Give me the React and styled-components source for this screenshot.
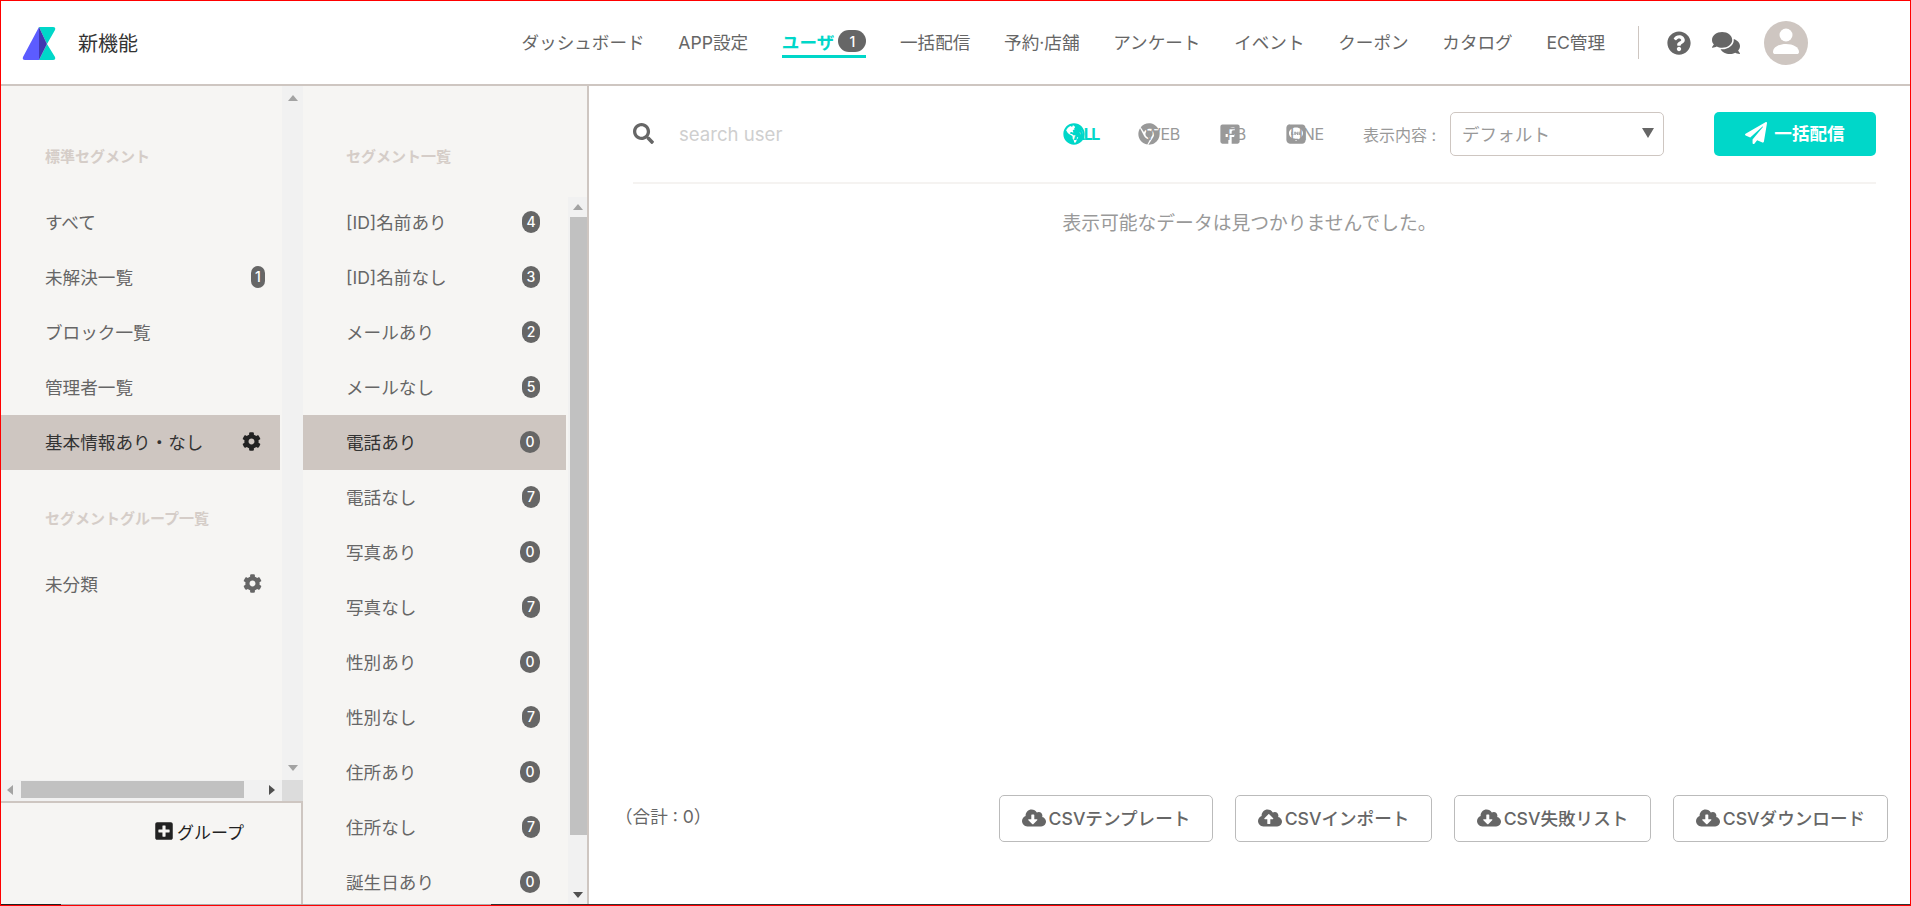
import React from "react";
import styled, { createGlobalStyle } from "styled-components";
import {
  FaChrome,
  FaCloudDownloadAlt,
  FaCloudUploadAlt,
  FaCog,
  FaComments,
  FaFacebookSquare,
  FaGlobeAmericas,
  FaLine,
  FaPaperPlane,
  FaPlusSquare,
  FaQuestionCircle,
  FaSearch,
} from "react-icons/fa";

const TEAL = "#00d7c9";
const ACTIVE = "#cec6c1";
const PANEL = "#f6f5f3";
const TEXT = "#666666";

const GlobalStyle = createGlobalStyle`
  html, body {
    margin: 0;
    padding: 0;
    height: 100%;
    overflow: hidden;
    background: #fff;
  }
  * { box-sizing: border-box; }
  body {
    font-family: Inter, "Noto Sans CJK JP", sans-serif;
    color: ${TEXT};
  }
`;

const Frame = styled.div`
  width: 1911px;
  height: 906px;
  border: 1px solid #ff0000;
  display: flex;
  flex-direction: column;
  overflow: hidden;
`;

const Header = styled.header`
  height: 85px;
  flex: none;
  display: flex;
  align-items: center;
  padding: 0 102px 0 21px;
  border-bottom: 2px solid ${ACTIVE};
`;

const Brand = styled.div`
  display: flex;
  align-items: center;
  gap: 22px;
  font-size: 20px;
  color: #333;
`;

const Nav = styled.nav`
  margin-left: auto;
  display: flex;
  align-items: center;
  gap: 33.7px;
  font-size: 17.6px;
`;

const NavItem = styled.a`
  display: flex;
  align-items: center;
  gap: 4px;
  height: 30px;
  white-space: nowrap;
  color: ${(p) => (p.$active ? TEAL : TEXT)};
  font-weight: ${(p) => (p.$active ? 700 : 400)};
  border-bottom: 3px solid ${(p) => (p.$active ? TEAL : "transparent")};
`;

const Badge = styled.span`
  display: inline-flex;
  align-items: center;
  justify-content: center;
  min-width: ${(p) => p.$w || 20}px;
  height: 22px;
  border-radius: 11px;
  background: ${TEXT};
  color: #fff;
  font-size: 14px;
  font-weight: 500;
`;

const HeaderDivider = styled.span`
  width: 1px;
  height: 33px;
  margin: 0 28px 0 33px;
  background: ${ACTIVE};
`;

const ToolIcon = styled.span`
  display: flex;
  color: ${TEXT};
  font-size: ${(p) => p.$size}px;
  margin-right: ${(p) => p.$gap}px;
`;

const Avatar = styled.div`
  width: 44px;
  height: 44px;
  border-radius: 50%;
  background: ${ACTIVE};
`;

const Body = styled.div`
  flex: 1;
  min-height: 0;
  display: flex;
`;

const SideColumn = styled.aside`
  width: 302px;
  flex: none;
  display: flex;
  flex-direction: column;
  background: ${PANEL};
`;

const SideScroller = styled.div`
  height: 715px;
  flex: none;
  display: grid;
  grid-template-columns: 281px 21px;
  grid-template-rows: 694px 21px;
`;

const SideList = styled.div`
  overflow: hidden;
`;

const VBar = styled.div`
  position: relative;
  background: #f1f1f1;
`;

const VThumb = styled.div`
  position: absolute;
  left: 2px;
  right: 0;
  top: 20px;
  height: 618px;
  background: #c1c1c1;
`;

const Arrow = styled.span`
  position: absolute;
  width: 0;
  height: 0;
  border-style: solid;
  border-color: transparent;
  ${(p) =>
    p.$dir === "up" && `border-width: 0 5px 6px; border-bottom-color: ${p.$color};`}
  ${(p) =>
    p.$dir === "down" && `border-width: 6px 5px 0; border-top-color: ${p.$color};`}
  ${(p) =>
    p.$dir === "left" && `border-width: 5px 6px 5px 0; border-right-color: ${p.$color};`}
  ${(p) =>
    p.$dir === "right" && `border-width: 5px 0 5px 6px; border-left-color: ${p.$color};`}
  ${(p) => p.$place}
`;

const HBar = styled.div`
  position: relative;
  background: #f1f1f1;
`;

const HThumb = styled.div`
  position: absolute;
  left: 20px;
  width: 223px;
  top: 1px;
  height: 17px;
  background: #c1c1c1;
`;

const Corner = styled.div`
  background: #dcdcdc;
`;

const SideFooter = styled.div`
  flex: 1;
  border-top: 2px solid ${ACTIVE};
  border-right: 2px solid ${ACTIVE};
  display: flex;
  justify-content: flex-end;
  padding: 18px 57px 0 0;
`;

const AddGroup = styled.div`
  display: flex;
  align-items: center;
  gap: 3px;
  height: 20px;
  font-size: 17px;
  color: #222;
`;

const SectionTitle = styled.div`
  padding: ${(p) => p.$pad};
  font-size: 15px;
  line-height: 22px;
  font-weight: 700;
  color: #d5cdc8;
  white-space: nowrap;
`;

const Row = styled.div`
  height: 55px;
  display: flex;
  align-items: center;
  justify-content: space-between;
  padding: ${(p) => p.$pad};
  font-size: 17.6px;
  white-space: nowrap;
  background: ${(p) => (p.$active ? ACTIVE : "transparent")};
  color: ${(p) => (p.$active ? "#333" : TEXT)};
  width: ${(p) => p.$w}px;
`;

const SegmentColumn = styled.section`
  width: 286px;
  flex: none;
  background: ${PANEL};
  border-right: 2px solid ${ACTIVE};
  display: flex;
  flex-direction: column;
`;

const SegmentScroller = styled.div`
  flex: 1;
  min-height: 0;
  display: flex;
`;

const SegmentList = styled.div`
  flex: 1;
  overflow: hidden;
`;

const SegmentBar = styled(VBar)`
  width: 19px;
  flex: none;
  margin-top: 2px;
`;

const Main = styled.main`
  flex: 1;
  min-width: 0;
  display: flex;
  flex-direction: column;
  background: #fff;
`;

const Toolbar = styled.div`
  margin: 26px 34px 0 44px;
  padding-bottom: 27px;
  border-bottom: 2px solid #f5f3f1;
  display: flex;
  align-items: center;
  height: 72px;
`;

const SearchIcon = styled.span`
  display: flex;
  font-size: 21px;
  color: ${TEXT};
`;

const SearchText = styled.span`
  margin-left: 25px;
  font-size: 18.6px;
  color: #cfcfcf;
`;

const Filters = styled.div`
  margin-left: auto;
  display: flex;
  align-items: center;
  gap: 39px;
`;

const FilterItem = styled.div`
  position: relative;
  width: ${(p) => p.$w}px;
  text-align: right;
  font-size: 16px;
  line-height: 22px;
  color: ${(p) => (p.$active ? TEAL : "#999")};
  font-weight: ${(p) => (p.$active ? 700 : 400)};
  letter-spacing: ${(p) => (p.$active ? "-1.5px" : "-0.3px")};
`;

const FilterIcon = styled.span`
  position: absolute;
  left: 0;
  top: 0;
  display: flex;
  font-size: 22px;
`;

const FilterLabel = styled.span`
  font-size: 16px;
  color: #999;
  white-space: nowrap;
`;

const SelectBox = styled.div`
  position: relative;
  width: 214px;
  height: 44px;
  margin-left: 14px;
  padding-left: 11px;
  display: flex;
  align-items: center;
  border: 1px solid ${ACTIVE};
  border-radius: 5px;
  color: #999;
  font-size: 17.6px;
`;

const SendButton = styled.button`
  width: 162px;
  height: 44px;
  margin-left: 50px;
  padding: 0 0 2px;
  border: 0;
  border-radius: 5px;
  background: ${TEAL};
  color: #fff;
  font: inherit;
  font-size: 17.6px;
  font-weight: 700;
  display: flex;
  align-items: center;
  justify-content: center;
  gap: 7px;
`;

const Message = styled.div`
  margin-top: 28px;
  text-align: center;
  font-size: 18.8px;
  line-height: 24px;
  color: #999;
`;

const Footer = styled.div`
  margin-top: auto;
  padding: 0 22px 62px 26px;
  display: flex;
  align-items: center;
  gap: 22px;
`;

const Total = styled.span`
  margin: 0 auto 6px 0;
  font-size: 17.6px;
`;

const CsvButton = styled.button`
  width: ${(p) => p.$w}px;
  height: 47px;
  padding: 0 0 2px;
  border: 1px solid #bbb;
  border-radius: 5px;
  background: #fff;
  color: ${TEXT};
  font: inherit;
  font-size: 17.6px;
  font-weight: 500;
  display: flex;
  align-items: center;
  justify-content: center;
  gap: 3px;
  white-space: nowrap;
`;

const StatusLine = styled.div`
  height: 1px;
  flex: none;
  background: linear-gradient(to right, #222 60px, #aaa 60px, #aaa 490px, #333 490px);
`;

const navItems = ["APP設定"];
const navAfter = ["一括配信", "予約·店舗", "アンケート", "イベント", "クーポン", "カタログ", "EC管理"];

const segments = [
  ["[ID]名前あり", 4],
  ["[ID]名前なし", 3],
  ["メールあり", 2],
  ["メールなし", 5],
  ["電話あり", 0],
  ["電話なし", 7],
  ["写真あり", 0],
  ["写真なし", 7],
  ["性別あり", 0],
  ["性別なし", 7],
  ["住所あり", 0],
  ["住所なし", 7],
  ["誕生日あり", 0],
];

const csvButtons = [
  ["CSVテンプレート", 214, FaCloudDownloadAlt],
  ["CSVインポート", 197, FaCloudUploadAlt],
  ["CSV失敗リスト", 197, FaCloudDownloadAlt],
  ["CSVダウンロード", 215, FaCloudDownloadAlt],
];

const filters = [
  ["ALL", 36, FaGlobeAmericas, true],
  ["WEB", 42, FaChrome, false],
  ["FB", 27, FaFacebookSquare, false],
  ["LINE", 39, FaLine, false],
];

const Logo = () => (
  <svg width="34" height="34" viewBox="0 0 34 34">
    <path d="M17 1 L1 31 Q0 34 3 34 L17 34 Z" fill="#5c5cff" />
    <path d="M17 1 L31 1 Q34 1 33 4 L25 18 L33 31 Q34 34 31 34 L17 34 L25 18 Z" fill="#00d7c9" />
    <path d="M17 1 L25 18 L17 34 Z" fill="#4038b0" />
  </svg>
);

const AvatarIcon = () => (
  <svg width="44" height="44" viewBox="0 0 44 44">
    <circle cx="22" cy="14" r="6.5" fill="#fff" />
    <path d="M9 31 C9 26 15 23 22 23 C29 23 35 26 35 31 C35 32.5 34 33 33 33 L11 33 C10 33 9 32.5 9 31 Z" fill="#fff" />
  </svg>
);

export default function App() {
  return (
    <>
      <GlobalStyle />
      <Frame>
        <Header>
          <Brand>
            <Logo />
            <span>新機能</span>
          </Brand>
          <Nav>
            <NavItem>ダッシュボード</NavItem>
            {navItems.map((n) => (
              <NavItem key={n}>{n}</NavItem>
            ))}
            <NavItem $active>
              ユーザ
              <Badge $w={28}>1</Badge>
            </NavItem>
            {navAfter.map((n) => (
              <NavItem key={n}>{n}</NavItem>
            ))}
          </Nav>
          <HeaderDivider />
          <ToolIcon $size={24} $gap={21}><FaQuestionCircle /></ToolIcon>
          <ToolIcon $size={28} $gap={24}><FaComments /></ToolIcon>
          <Avatar><AvatarIcon /></Avatar>
        </Header>
        <Body>
          <SideColumn>
            <SideScroller>
              <SideList>
                <SectionTitle $pad="60px 0 27px 44px">標準セグメント</SectionTitle>
                <Row $pad="0 15px 2px 44px" $w={279}>すべて</Row>
                <Row $pad="0 15px 2px 44px" $w={279}>
                  未解決一覧
                  <Badge $w={14}>1</Badge>
                </Row>
                <Row $pad="0 15px 2px 44px" $w={279}>ブロック一覧</Row>
                <Row $pad="0 15px 2px 44px" $w={279}>管理者一覧</Row>
                <Row $pad="0 19px 2px 44px" $w={279} $active>
                  基本情報あり・なし
                  <FaCog size={19} color="#222" />
                </Row>
                <SectionTitle $pad="38px 0 26px 44px">セグメントグループ一覧</SectionTitle>
                <Row $pad="0 18px 0 44px" $w={279}>
                  未分類
                  <FaCog size={19} color={TEXT} />
                </Row>
              </SideList>
              <VBar>
                <Arrow $dir="up" $color="#a3a3a3" $place="left: 6px; top: 9px;" />
                <Arrow $dir="down" $color="#a3a3a3" $place="left: 6px; bottom: 9px;" />
              </VBar>
              <HBar>
                <Arrow $dir="left" $color="#a3a3a3" $place="left: 6px; top: 5px;" />
                <HThumb />
                <Arrow $dir="right" $color="#505050" $place="right: 7px; top: 5px;" />
              </HBar>
              <Corner />
            </SideScroller>
            <SideFooter>
              <AddGroup>
                <FaPlusSquare size={20} color="#222" />
                グループ
              </AddGroup>
            </SideFooter>
          </SideColumn>
          <SegmentColumn>
            <SectionTitle $pad="60px 0 27px 43px">セグメント一覧</SectionTitle>
            <SegmentScroller>
              <SegmentList>
                {segments.map(([name, count]) => (
                  <Row key={name} $pad="0 26px 2px 43px" $w={263} $active={name === "電話あり"}>
                    {name}
                    <Badge $w={count === 0 ? 20 : 18}>{count}</Badge>
                  </Row>
                ))}
              </SegmentList>
              <SegmentBar>
                <Arrow $dir="up" $color="#a3a3a3" $place="left: 5px; top: 7px;" />
                <VThumb />
                <Arrow $dir="down" $color="#505050" $place="left: 5px; bottom: 6px;" />
              </SegmentBar>
            </SegmentScroller>
          </SegmentColumn>
          <Main>
            <Toolbar>
              <SearchIcon><FaSearch /></SearchIcon>
              <SearchText>search user</SearchText>
              <Filters>
                {filters.map(([label, w, Icon, active]) => (
                  <FilterItem key={label} $w={w} $active={active}>
                    {label}
                    <FilterIcon><Icon /></FilterIcon>
                  </FilterItem>
                ))}
                <FilterLabel>表示内容 :</FilterLabel>
              </Filters>
              <SelectBox>
                デフォルト
                <Arrow $dir="down" $color={TEXT} $place="right: 9px; top: 15px; border-width: 10px 6px 0;" />
              </SelectBox>
              <SendButton>
                <FaPaperPlane size={22} />
                一括配信
              </SendButton>
            </Toolbar>
            <Message>表示可能なデータは見つかりませんでした。</Message>
            <Footer>
              <Total>（合計 : 0）</Total>
              {csvButtons.map(([label, w, Icon]) => (
                <CsvButton key={label} $w={w}>
                  <Icon size={24} />
                  {label}
                </CsvButton>
              ))}
            </Footer>
          </Main>
        </Body>
        <StatusLine />
      </Frame>
    </>
  );
}
